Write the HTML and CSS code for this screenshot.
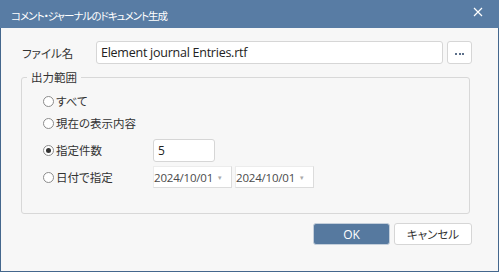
FILE: index.html
```html
<!DOCTYPE html>
<html lang="ja">
<head>
<meta charset="utf-8">
<link rel="stylesheet" href="styles.css">
</head>
<body>
<div class="window">
  <div class="titlebar">
    <span class="title">コメント・ジャーナルのドキュメント生成</span>
    <svg class="close" width="10" height="10" viewBox="0 0 10 10"><path d="M1 1L9 9M9 1L1 9" stroke="#fff" stroke-width="1.2" fill="none"/></svg>
  </div>
  <div class="content">
    <div class="file-row">
      <span class="label">ファイル名</span>
      <div class="textbox file-box">Element journal Entries.rtf</div>
      <div class="dots-btn"><span class="dot"></span><span class="dot"></span><span class="dot"></span></div>
    </div>
    <fieldset class="group">
      <legend>出力範囲</legend>
      <div class="opt r1"><span class="radio"></span><span class="opt-text">すべて</span></div>
      <div class="opt r2"><span class="radio"></span><span class="opt-text">現在の表示内容</span></div>
      <div class="opt r3"><span class="radio checked"></span><span class="opt-text">指定件数</span><div class="textbox count-box">5</div></div>
      <div class="opt r4"><span class="radio"></span><span class="opt-text">日付で指定</span>
        <div class="date-box">2024/10/01<span class="arrow">▾</span></div>
        <div class="date-box">2024/10/01<span class="arrow">▾</span></div>
      </div>
    </fieldset>
    <div class="buttons">
      <div class="btn ok">OK</div>
      <div class="btn cancel">キャンセル</div>
    </div>
  </div>
</div>
</body>
</html>
```
FILE: styles.css
```css
* { box-sizing: border-box; }
html, body { margin: 0; padding: 0; }
body {
  width: 499px; height: 272px; overflow: hidden;
  font-family: "Noto Sans CJK JP", "Noto Sans", sans-serif;
  font-feature-settings: "palt";
  font-size: 11px;
  color: #222;
}
.window {
  width: 499px; height: 272px;
  background: #f7f7f7;
  border: 1px solid #44678d;
  border-top: none;
  display: flex; flex-direction: column;
}
.titlebar {
  height: 28px;
  background: #587ca4;
  color: #fff;
  display: flex; align-items: center;
  padding: 3px 0 0 11px;
  margin: 0 -1px;
}
.title { font-size: 10.5px; letter-spacing: -1px; flex: 1; }
.close { margin: -8px 16px 0 0; }
.content { padding: 13px 26px 0 20px; }
.file-row { display: flex; align-items: center; height: 23px; }
.label { width: 75px; padding-left: 1px; font-size: 11.5px; color: #333; }
.textbox {
  background: #fff;
  border: 1px solid #d6d6d6;
  border-radius: 3px;
  display: flex; align-items: center;
  font-family: "Open Sans", "Noto Sans", sans-serif;
  font-feature-settings: normal;
  color: #222;
}
.file-box { width: 347px; height: 23px; padding-left: 4px; font-size: 12.5px; letter-spacing: -0.25px; }
.dots-btn {
  width: 25px; height: 23px; margin-left: 4px;
  background: #fff; border: 1px solid #d6d6d6; border-radius: 3px;
  display: flex; align-items: center; justify-content: center; gap: 1.5px;
  padding-top: 3px;
}
.dot { width: 2px; height: 2px; background: #5b6f8a; }
.group {
  margin: 5px 0 0 0;
  padding: 5px 0 0 0;
  border: 1px solid #d8d8d8;
  border-radius: 3px;
  height: 145px;
  width: 449px;
}
.group legend {
  margin-left: 5px;
  padding: 0 4px;
  font-size: 11.5px;
  line-height: 16px;
  color: #333;
}
.opt { display: flex; align-items: center; height: 22px; padding-left: 21px; }
.r3 { margin-top: 5px; }
.r4 { margin-top: 5px; }
.radio {
  width: 11px; height: 11px; border-radius: 50%;
  border: 1px solid #8c8c8c; background: #fff;
  position: relative; flex: none;
}
.radio.checked::after {
  content: ""; position: absolute; left: 2px; top: 2px;
  width: 5px; height: 5px; border-radius: 50%; background: #333;
}
.opt-text { margin-left: 2px; width: 97px; font-size: 11.5px; color: #333; }
.count-box { width: 62px; height: 23px; padding-left: 4px; font-size: 12px; }
.date-box {
  width: 79px; height: 22px; margin-right: 3px;
  background: #fff;
  border: 1px solid #ececec;
  border-right-color: #dcdcdc; border-bottom-color: #dcdcdc;
  display: flex; align-items: center;
  font-family: "Open Sans", "Noto Sans", sans-serif;
  font-feature-settings: normal;
  font-size: 11.5px; color: #4a4a4a; letter-spacing: -0.2px;
  padding-left: 0;
}
.arrow { font-size: 7px; color: #aaa; margin-left: 5px; }
.buttons { display: flex; justify-content: flex-end; gap: 4px; margin-top: 9px; }
.btn {
  height: 22px; border-radius: 3px;
  display: flex; align-items: center; justify-content: center;
  font-size: 11.5px;
}
.ok { width: 77px; background: #56799f; color: #fff; border: 1px solid #c4cfdb; font-family: "Open Sans", sans-serif; font-size: 12px; }
.cancel { width: 78px; background: #fff; color: #333; border: 1px solid #d6d6d6; }
```
